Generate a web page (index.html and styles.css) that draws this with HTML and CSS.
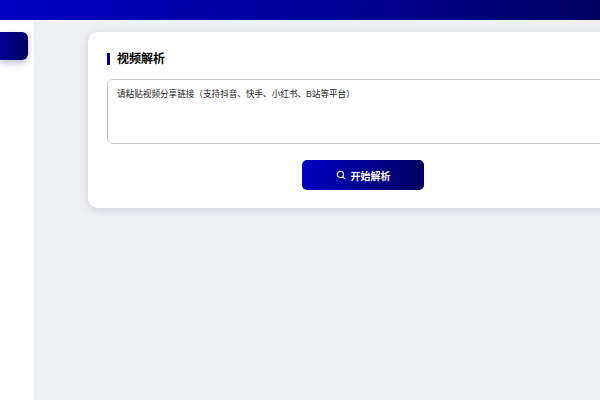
FILE: index.html
```html
<!DOCTYPE html>
<html lang="zh-CN">
<head>
  <meta charset="UTF-8">
  <title>视频解析</title>
  <link rel="stylesheet" href="styles.css">
</head>
<body>

<header class="top-bar"></header>

<div class="layout">
  <aside class="sidebar">
    <div class="nav-active"></div>
  </aside>

  <main class="content">
    <section class="card">
      <h2 class="card-title">视频解析</h2>
      <div class="url-box">请粘贴视频分享链接（支持抖音、快手、小红书、B站等平台）</div>
      <div class="actions">
        <button class="parse-button">
          <svg class="parse-icon" viewBox="0 0 24 24" fill="none" stroke="currentColor" stroke-width="2.6" stroke-linecap="round">
            <circle cx="10.5" cy="10.5" r="7.5"/>
            <path d="M16 16l5.5 5.5"/>
          </svg>
          开始解析
        </button>
      </div>
    </section>
  </main>
</div>

</body>
</html>
```

FILE: styles.css
```css
* {
  box-sizing: border-box;
}
html, body {
  height: 100%;
}
body {
  margin: 0;
  overflow: hidden;
  font-family: "Liberation Sans", "Noto Sans CJK SC", sans-serif;
  background: #eff0f4;
  color: #111;
}
.top-bar {
  height: 21px;
  background: linear-gradient(100deg, #0000c4, #00008c 66%, #00005e);
  border-bottom: 1px solid #f7f2fa;
}
.layout {
  display: flex;
  height: 379px;
}
.sidebar {
  flex: 0 0 35px;
  background: #fff;
  border-right: 1px solid #e8e9f2;
  padding-top: 11px;
}
.nav-active {
  width: 28px;
  height: 28px;
  background: linear-gradient(100deg, #000096, #00005e);
  border-radius: 0 6px 6px 0;
  box-shadow: 0 3px 7px rgba(0, 0, 120, 0.25);
}
.content {
  flex: 1;
  min-width: 0;
  overflow: hidden;
  padding: 11px 0 12px 53px;
}
.card {
  width: 550px;
  height: 176px;
  background: #fff;
  border-radius: 10px;
  box-shadow: 0 2px 8px rgba(40, 40, 80, 0.16);
  padding: 21px 19px 18px;
}
.card-title {
  margin: 0 0 14px;
  height: 12px;
  padding-left: 7px;
  border-left: 3px solid #00009a;
  font-size: 12px;
  line-height: 12px;
  font-weight: 700;
  color: #000;
}
.url-box {
  height: 65px;
  border: 1px solid #c3c8d0;
  border-radius: 6px;
  padding: 7px 9px;
  font-size: 8.6px;
  line-height: 14px;
  color: #222;
}
.actions {
  display: flex;
  justify-content: center;
  margin-top: 16px;
}
.parse-button {
  display: flex;
  align-items: center;
  justify-content: center;
  gap: 5px;
  width: 122px;
  height: 30px;
  border: none;
  border-radius: 5px;
  background: linear-gradient(100deg, #0000c4, #00005e);
  color: #fff;
  font-family: inherit;
  font-size: 10px;
  font-weight: 700;
}
.parse-icon {
  width: 10px;
  height: 10px;
}
```
